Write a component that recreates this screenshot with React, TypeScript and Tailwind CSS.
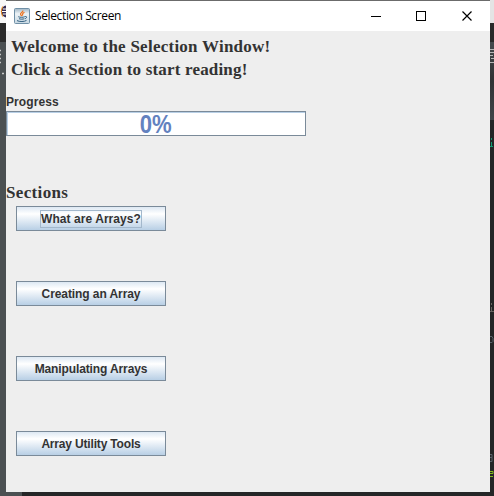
import type { ReactNode } from "react";

const sections = [
  { label: "What are Arrays?", focused: true, tracking: "tracking-[0.06px]" },
  { label: "Creating an Array", focused: false, tracking: "tracking-[-0.08px]" },
  { label: "Manipulating Arrays", focused: false, tracking: "tracking-[-0.12px]" },
  { label: "Array Utility Tools", focused: false, tracking: "tracking-[-0.17px]" },
];

function JavaIcon() {
  return (
    <svg width="16" height="16" viewBox="0 0 16 16" className="block">
      <defs>
        <linearGradient id="tile" x1="0" y1="0" x2="0" y2="1">
          <stop offset="0" stopColor="#9fb5c5" />
          <stop offset=".35" stopColor="#edf3f6" />
          <stop offset="1" stopColor="#c6d7e2" />
        </linearGradient>
      </defs>
      <rect x=".5" y=".5" width="15" height="15" rx="1" fill="url(#tile)" stroke="#7090a7" />
      <path d="M8.800 2.500c.8 2-3.300 2.200-2.200 4.200L7.800 8M10.500 4.300C7.600 5.500 8.400 6.200 8.700 7.700" fill="none" stroke="#ed7320" strokeWidth="1.200" />
      <path d="M4.300 8.700c1.500.8 4.700.8 6.500 0M5 10.700c1.500.6 4 .6 5.300 0M3 12.600c2.500 1.300 7.500 1.200 9.500-.2M11.200 8.500c2-.5 1.800 1.800-.3 2.200" fill="none" stroke="#315f80" strokeWidth="1" />
    </svg>
  );
}

function TitleBar() {
  return (
    <header className="flex h-[30px] items-center bg-white pl-2">
      <JavaIcon />
      <span className="ml-[5px] grow whitespace-nowrap font-['Open_Sans','Noto_Sans',sans-serif] text-[12px] leading-[30px] tracking-[-0.37px] text-black">Selection Screen</span>
      <svg width="102" height="12" viewBox="0 0 102 12" className="mr-[17px] block" fill="none" stroke="#000" shapeRendering="crispEdges">
        <path d="M0 6.500h10M45.500 1.500h9v9h-9z" />
        <path d="M91.500 1.500l9 9M100.500 1.500l-9 9" shapeRendering="auto" strokeWidth="1.200" />
      </svg>
    </header>
  );
}

function Heading({ children }: { children: ReactNode }) {
  return <div className="h-[23px] whitespace-nowrap font-['Liberation_Serif',serif] text-[17px] font-bold leading-[23px] text-[#333]">{children}</div>;
}

function LeftEdge() {
  return (
    <div className="flex w-1.5 shrink-0 flex-col overflow-hidden bg-[#4b5052]">
      <div className="h-[23px] bg-[#f7f7f7] pt-[5px]">
        <svg width="6" height="13" viewBox="0 0 6 13" className="block"><circle cx="7" cy="6.500" r="6" fill="#342c54" /><path d="M2.500 1.500Q0 6 2.500 11.500" fill="none" stroke="#f7941e" /><path d="M3 4h3M2 6.500h4M3 9h3" stroke="#fff" /></svg>
      </div>
      <div className="h-[19px] bg-[#2b2b2b]" />
      <svg width="6" height="36" viewBox="0 0 6 36" className="block"><path d="M0 8.500h1M0 12.500h1M0 16.500h1M0 20.500h1M2 31.500h2" stroke="#c8c8c8" strokeWidth="1.500" /></svg>
    </div>
  );
}

function RightEdge() {
  return (
    <div className="flex w-1 shrink-0 flex-col overflow-hidden bg-[#242526]">
      <div className="h-[23px] bg-[#e4e4e4]" />
      <div className="h-[19px] bg-[#292929]" />
      <div className="h-[78px] bg-linear-to-b from-[#454a4d] via-[#303234] to-[#41464a]">
        <svg width="4" height="24" viewBox="0 0 4 24" className="block"><path d="M0 7.500h4M0 10.500h4M0 13.500h3M1 16.500h3M0 20.500h4" stroke="#b5b5b5" /></svg>
      </div>
      <svg width="4" height="372" viewBox="0 0 4 372" className="block shrink-0" fill="none">
        <path d="M1.500 18v2M1.500 22v5M0 26.500h3" stroke="#129b72" />
        <path d="M1.500 183v2M1.500 187v4M0 191.500h4" stroke="#66625f" />
        <path d="M0 216.500h2l1 2v3l-1 1H0M0 334.500h2v3H0h2v4H0" stroke="#596168" />
        <path d="M0 351.500h3v2H0M0 356.500h3" stroke="#83b71c" />
      </svg>
    </div>
  );
}

export default function App() {
  return (
    <div className="flex h-[496px] w-[494px] flex-col overflow-hidden bg-[#252627]">
      <div className="flex h-[492px]">
        <LeftEdge />
        <main className="flex w-[484px] flex-col border-t border-[#6b6b6b] bg-[#eee]">
          <TitleBar />
          <div className="pl-[5px] pt-1">
            <Heading><span className="tracking-[0.25px]">Welcome to the Selection Window!</span></Heading>
            <Heading><span className="tracking-[0.18px]">Click a Section to start reading!</span></Heading>
          </div>
          <div className="mt-[13px] h-4 font-['Liberation_Sans',sans-serif] text-[12px] font-bold leading-[17px] tracking-[0.1px] text-[#333]">Progress</div>
          <div className="mt-px flex h-[25px] w-[300px] items-center justify-center border border-[#7a8a99] bg-white pt-0.5 font-['Liberation_Sans',sans-serif] text-[26px] font-bold leading-[25px] text-[#6382bf] shadow-[inset_1px_1px_0_#b8cfe5]">
            <span className="inline-block scale-x-[.85]">0%</span>
          </div>
          <div className="mt-[45px]"><Heading><span className="tracking-[0.35px]">Sections</span></Heading></div>
          <div className="mt-[2px] flex flex-col gap-[50px] pl-2.5">
            {sections.map(({ label, focused, tracking }) => (
              <button key={label} className="flex h-[25px] w-[150px] items-center justify-center border border-[#7a8a99] bg-linear-to-b from-[#dde8f3] via-white via-30% to-[#b8cfe5] font-['Liberation_Sans',sans-serif] text-[12px] font-bold leading-[17px] text-[#333]">
                <span className={`${tracking} whitespace-nowrap ${focused ? "border border-[#a3b8cc] leading-4" : "pt-0.5"}`}>{label}</span>
              </button>
            ))}
          </div>
        </main>
        <RightEdge />
      </div>
      <div className="h-1 w-[22px] bg-[#4b5052]" />
    </div>
  );
}
